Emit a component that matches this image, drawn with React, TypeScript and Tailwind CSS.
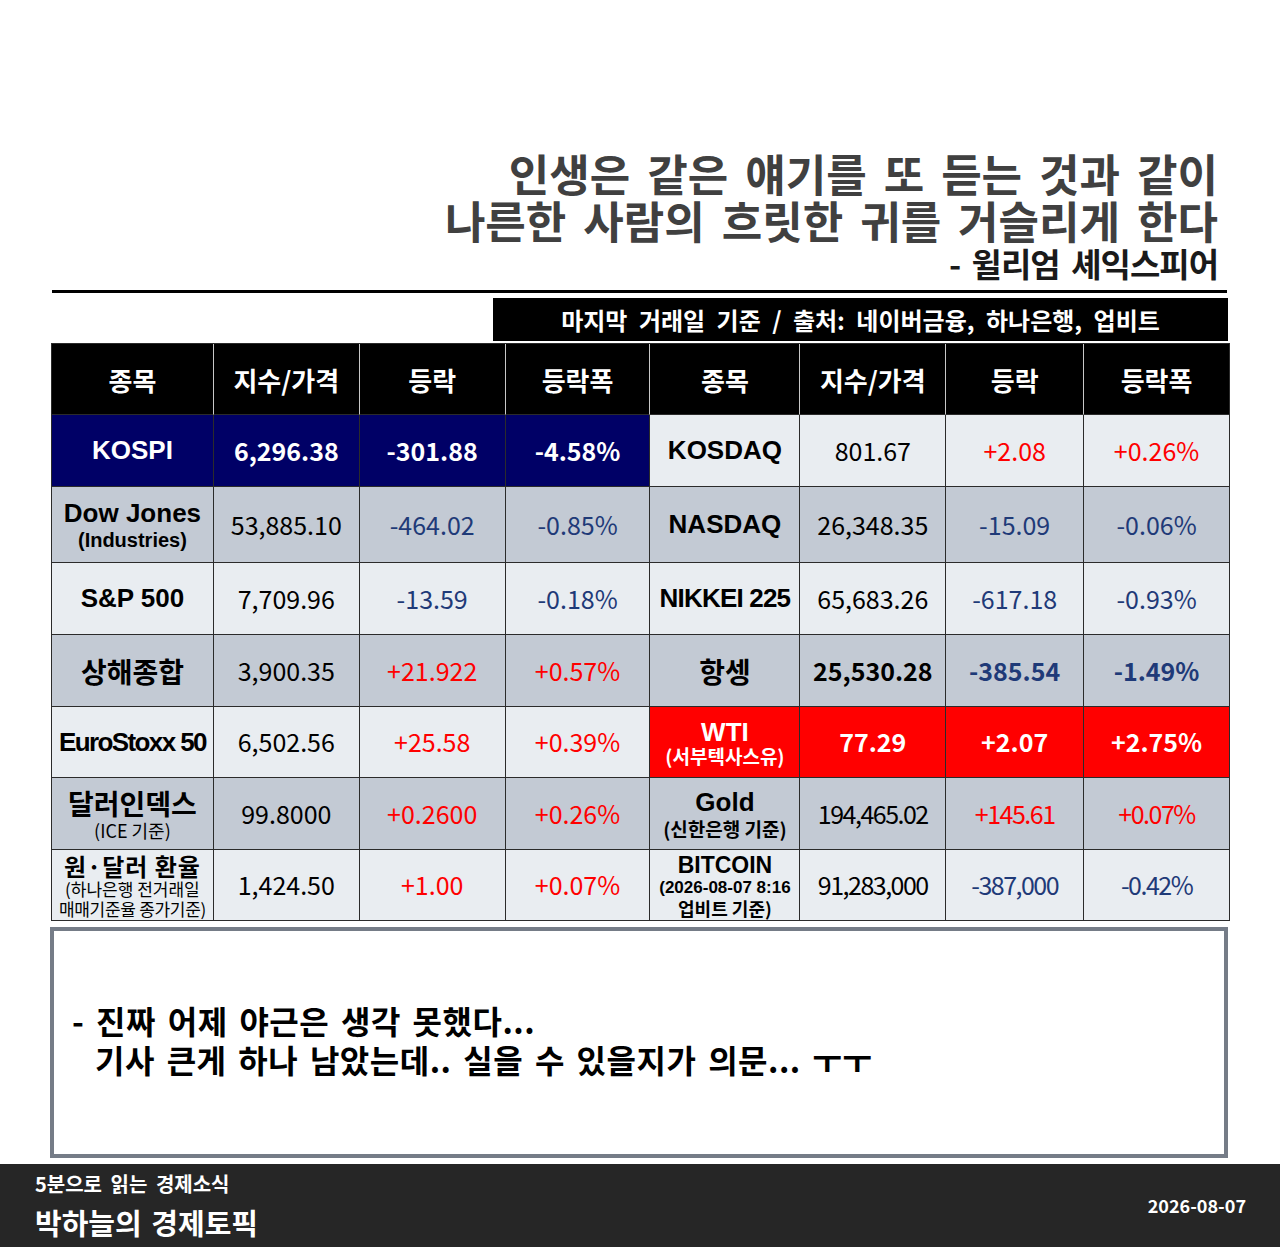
import React from 'react';

const KR = { fontFamily: '"Noto Sans CJK KR", "Noto Sans", sans-serif' };
const EN = { fontFamily: '"Liberation Sans", "Noto Sans CJK KR", sans-serif' };

type Cell = {
  name: React.ReactNode;
  price: string;
  change: string;
  pct: string;
  tone: 'up' | 'down';
  theme?: 'navy' | 'red';
  bold?: boolean;
  tight?: boolean;
};

const UP = 'text-[#ff0000]';
const DOWN = 'text-[#1f3a78]';

const rows: { bg: string; left: Cell; right: Cell }[] = [
  {
    bg: 'bg-[#e9edf1]',
    left: { name: <span className="text-[26px]">KOSPI</span>, price: '6,296.38', change: '-301.88', pct: '-4.58%', tone: 'down', theme: 'navy' },
    right: { name: <span className="text-[26px]">KOSDAQ</span>, price: '801.67', change: '+2.08', pct: '+0.26%', tone: 'up' },
  },
  {
    bg: 'bg-[#c3cad4]',
    left: {
      name: (
        <div className="flex flex-col items-center leading-none">
          <span className="text-[26px]">Dow Jones</span>
          <span className="text-[20px] mt-[4px]">(Industries)</span>
        </div>
      ),
      price: '53,885.10', change: '-464.02', pct: '-0.85%', tone: 'down',
    },
    right: { name: <span className="text-[26px]">NASDAQ</span>, price: '26,348.35', change: '-15.09', pct: '-0.06%', tone: 'down' },
  },
  {
    bg: 'bg-[#e9edf1]',
    left: { name: <span className="text-[26px]">S&amp;P 500</span>, price: '7,709.96', change: '-13.59', pct: '-0.18%', tone: 'down' },
    right: { name: <span className="text-[26px] tracking-[-0.8px] whitespace-nowrap">NIKKEI 225</span>, price: '65,683.26', change: '-617.18', pct: '-0.93%', tone: 'down' },
  },
  {
    bg: 'bg-[#c3cad4]',
    left: { name: <span className="text-[28px]" style={KR}>상해종합</span>, price: '3,900.35', change: '+21.922', pct: '+0.57%', tone: 'up' },
    right: { name: <span className="text-[28px]" style={KR}>항셍</span>, price: '25,530.28', change: '-385.54', pct: '-1.49%', tone: 'down', bold: true },
  },
  {
    bg: 'bg-[#e9edf1]',
    left: { name: <span className="text-[26px] tracking-[-1.6px] whitespace-nowrap">EuroStoxx 50</span>, price: '6,502.56', change: '+25.58', pct: '+0.39%', tone: 'up' },
    right: {
      name: (
        <div className="flex flex-col items-center leading-none">
          <span className="text-[26px]">WTI</span>
          <span className="text-[19px] mt-[1px]" style={KR}>(서부텍사스유)</span>
        </div>
      ),
      price: '77.29', change: '+2.07', pct: '+2.75%', tone: 'up', theme: 'red',
    },
  },
  {
    bg: 'bg-[#c3cad4]',
    left: {
      name: (
        <div className="flex flex-col items-center" style={KR}>
          <span className="text-[28px] leading-[32px]">달러인덱스</span>
          <span className="text-[18px] leading-[22px] font-normal">(ICE 기준)</span>
        </div>
      ),
      price: '99.8000', change: '+0.2600', pct: '+0.26%', tone: 'up',
    },
    right: {
      name: (
        <div className="flex flex-col items-center leading-none">
          <span className="text-[26px]">Gold</span>
          <span className="text-[19px] mt-[4px]" style={KR}>(신한은행 기준)</span>
        </div>
      ),
      price: '194,465.02', change: '+145.61', pct: '+0.07%', tone: 'up', tight: true,
    },
  },
  {
    bg: 'bg-[#e9edf1]',
    left: {
      name: (
        <div className="flex flex-col items-center leading-none" style={KR}>
          <span className="text-[24px] leading-[27px] tracking-[1px] whitespace-nowrap">원·달러 환율</span>
          <span className="text-[17px] font-normal leading-[20px] whitespace-nowrap">(하나은행 전거래일</span>
          <span className="text-[17px] font-normal leading-[20px] whitespace-nowrap tracking-[-0.3px]">매매기준율 종가기준)</span>
        </div>
      ),
      price: '1,424.50', change: '+1.00', pct: '+0.07%', tone: 'up',
    },
    right: {
      name: (
        <div className="flex flex-col items-center leading-none">
          <span className="text-[23px] leading-[24px]">BITCOIN</span>
          <span className="text-[17px] leading-[20px] mt-[1px] whitespace-nowrap">(2026-08-07 8:16</span>
          <span className="text-[18px] leading-[20px]" style={KR}>업비트 기준)</span>
        </div>
      ),
      price: '91,283,000', change: '-387,000', pct: '-0.42%', tone: 'down', tight: true,
    },
  },
];

const heights = ['h-[72px]', 'h-[76px]', 'h-[72px]', 'h-[72px]', 'h-[71px]', 'h-[72px]', 'h-[71px]'];

function Cells({ c, bg, widths }: { c: Cell; bg: string; widths: string[] }) {
  const colored = c.theme === 'navy' ? 'bg-[#000066]' : c.theme === 'red' ? 'bg-[#ff0000]' : bg;
  const toneCls = c.theme ? 'text-white' : c.tone === 'up' ? UP : DOWN;
  const plain = c.theme ? 'text-white' : 'text-black';
  const weight = c.theme || c.bold ? 'font-bold' : 'font-normal';
  const cellBase = 'flex items-center justify-center border-r border-b border-[#2b2b2b]';
  const numCls = `text-[25px] ${weight} ${c.tight ? 'tracking-[-1.5px]' : ''}`;
  return (
    <>
      <div className={`${cellBase} ${widths[0]} ${colored} font-bold ${plain}`} style={EN}>
        {c.name}
      </div>
      <div className={`${cellBase} ${widths[1]} ${colored} ${numCls} ${plain}`} style={KR}>
        {c.price}
      </div>
      <div className={`${cellBase} ${widths[2]} ${colored} ${numCls} ${toneCls}`} style={KR}>
        {c.change}
      </div>
      <div className={`${cellBase} ${widths[3]} ${colored} ${numCls} ${toneCls}`} style={KR}>
        {c.pct}
      </div>
    </>
  );
}

export default function App() {
  const leftW = ['w-[162px]', 'w-[146px]', 'w-[146px]', 'w-[145px]'];
  const rightW = ['w-[150px]', 'w-[146px]', 'w-[138px]', 'w-[146px]'];
  const headers = ['종목', '지수/가격', '등락', '등락폭'];

  return (
    <div className="w-[1280px] h-[1247px] bg-white flex flex-col" style={KR}>
      {/* quote */}
      <div className="pt-[150px] pr-[62px] text-right font-bold">
        <div className="text-[44px] leading-[47px] text-[#404040] [word-spacing:7px]">인생은 같은 얘기를 또 듣는 것과 같이</div>
        <div className="text-[44px] leading-[47px] text-[#404040] [word-spacing:7px]">나른한 사람의 흐릿한 귀를 거슬리게 한다</div>
        <div className="text-[33px] leading-[38px] text-[#1a1a1a] tracking-[-1px] [word-spacing:5px]">- 윌리엄 셰익스피어</div>
      </div>

      <div className="ml-[52px] mt-[8px] w-[1175px] h-[3px] bg-black" />

      <div className="ml-[493px] mt-[5px] w-[735px] h-[43px] bg-black text-white flex items-center justify-center text-[24px] font-bold [word-spacing:6px]">
        마지막 거래일 기준 / 출처: 네이버금융, 하나은행, 업비트
      </div>

      {/* table */}
      <div className="ml-[51px] mt-[2px] w-[1179px] border-l border-t border-[#2b2b2b]">
        <div className="flex h-[71px] bg-black">
          {[...leftW, ...rightW].map((w, i) => (
            <div
              key={i}
              className={`${w} flex items-center justify-center text-white text-[26px] font-bold border-r border-b border-[#c8c8c8] last:border-r-[#2b2b2b] border-b-[#2b2b2b]`}
            >
              {headers[i % 4]}
            </div>
          ))}
        </div>
        {rows.map((r, i) => (
          <div key={i} className={`flex ${heights[i]}`}>
            <Cells c={r.left} bg={r.bg} widths={leftW} />
            <Cells c={r.right} bg={r.bg} widths={rightW} />
          </div>
        ))}
      </div>

      {/* comment */}
      <div className="ml-[50px] mt-[6px] w-[1178px] h-[231px] border-4 border-[#757c87] bg-white flex flex-col justify-center pl-[18px] pb-[6px]">
        <div className="text-[32px] leading-[39px] font-bold text-black tracking-[0.5px] [word-spacing:4px]">- 진짜 어제 야근은 생각 못했다...</div>
        <div className="text-[32px] leading-[39px] font-bold text-black tracking-[0.5px] [word-spacing:4px] pl-[23px]">기사 큰게 하나 남았는데.. 실을 수 있을지가 의문... ㅜㅜ</div>
      </div>

      {/* footer */}
      <div className="mt-auto h-[83px] bg-[#262626] text-white flex items-center justify-between pl-[35px] pr-[34px]">
        <div className="flex flex-col">
          <span className="text-[20px] leading-[22px] font-bold [word-spacing:4px]">5분으로 읽는 경제소식</span>
          <span className="text-[29px] leading-[34px] font-bold mt-[10px] [word-spacing:3px]">박하늘의 경제토픽</span>
        </div>
        <span className="text-[18px] font-bold">2026-08-07</span>
      </div>
    </div>
  );
}
